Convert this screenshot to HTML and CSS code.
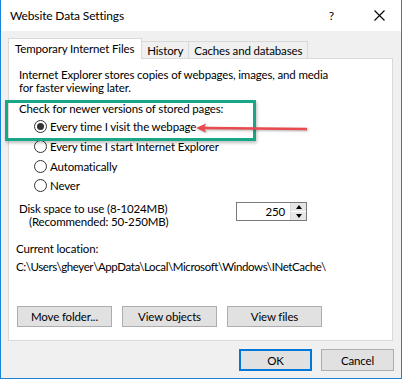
FILE: index.html
```html
<!DOCTYPE html>
<html lang="en">
<head>
    <meta charset="UTF-8">
    <title>Website Data Settings</title>
    <link rel="stylesheet" href="styles.css">
</head>
<body>
    <div class="window">
        <div class="titlebar">
            <span class="title">Website Data Settings</span>
            <span class="help">?</span>
            <svg class="close" width="11" height="11" viewBox="0 0 11 11">
                <path d="M0.5 0.5 L10.5 10.5 M10.5 0.5 L0.5 10.5" stroke="#000" stroke-width="1.1" fill="none"/>
            </svg>
        </div>
        <div class="body">
            <div class="tabs">
                <div class="tab active">Temporary Internet Files</div>
                <div class="tab">History</div>
                <div class="tab">Caches and databases</div>
            </div>
            <div class="panel">
                <p class="desc">Internet Explorer stores copies of webpages, images, and media<br>for faster viewing later.</p>
                <p class="check">Check for newer versions of stored pages:</p>
                <div class="radios">
                    <label class="radio"><span class="dot checked"></span>Every time I visit the webpage</label>
                    <label class="radio"><span class="dot"></span>Every time I start Internet Explorer</label>
                    <label class="radio"><span class="dot"></span>Automatically</label>
                    <label class="radio"><span class="dot"></span>Never</label>
                </div>
                <div class="disk">
                    <div class="disk-text">
                        <div>Disk space to use (8-1024MB)</div>
                        <div class="rec">(Recommended: 50-250MB)</div>
                    </div>
                    <div class="spinner">
                        <span class="value">250</span>
                        <div class="spin">
                            <span class="up"></span>
                            <span class="down"></span>
                        </div>
                    </div>
                </div>
                <p class="loc-label">Current location:</p>
                <p class="loc">C:\Users\gheyer\AppData\Local\Microsoft\Windows\INetCache\</p>
                <div class="actions">
                    <button class="btn">Move folder...</button>
                    <button class="btn">View objects</button>
                    <button class="btn">View files</button>
                </div>
            </div>
            <div class="footer">
                <button class="btn ok">OK</button>
                <button class="btn">Cancel</button>
            </div>

            <!-- annotation overlays -->
            <div class="highlight"></div>
            <svg class="arrow" width="120" height="14" viewBox="0 0 120 14">
                <path d="M9 7 L112 8" stroke="#e84a4f" stroke-width="2.5" fill="none"/>
                <path d="M1 7 L11 2.5 L9 7 L11 11.5 Z" fill="#e84a4f"/>
            </svg>
        </div>
    </div>
</body>
</html>
```

FILE: styles.css
```css
* { box-sizing: border-box; }
body { margin: 0; font-family: Lato, "Noto Sans", sans-serif; font-size: 11.5px; letter-spacing: -0.15px; color: #000; }
p { margin: 0; }

.window {
    width: 402px;
    height: 379px;
    border: 1px solid #1883d7;
    border-top: none;
    background: #f0f0f0;
    display: flex;
    flex-direction: column;
}

/* Title bar */
.titlebar { height: 31px; background: #fff; display: flex; align-items: center; padding-left: 9px; }
.title { flex: 1; font-size: 12px; }
.help { margin-right: 40px; font-size: 12px; }
.close { margin-right: 16px; }

.body { position: relative; flex: 1; padding-top: 7px; }

/* Tabs */
.tabs { display: flex; align-items: flex-end; margin-left: 7px; height: 20px; }
.tab {
    height: 17px;
    line-height: 17px;
    padding: 0 5px;
    border: 1px solid #d9d9d9;
    border-bottom: none;
    border-left: none;
    background: #f0f0f0;
}
.tab.active {
    height: 21px;
    line-height: 19px;
    padding: 0 7px 0 6px;
    border-left: 1px solid #d9d9d9;
    background: #fff;
    margin-bottom: -1px;
    position: relative;
    z-index: 1;
}

.panel {
    margin: 0 8px 0 7px;
    height: 283px;
    background: #fff;
    border: 1px solid #d9d9d9;
    padding: 9px 10px 0 10px;
}
.desc { line-height: 13px; }
.check { margin-top: 8px; line-height: 13px; }
.radios { margin-top: 2px; margin-left: 15px; }
.radio { display: flex; align-items: center; height: 19.67px; }
.dot {
    width: 13px;
    height: 13px;
    border: 1px solid #333;
    border-radius: 50%;
    margin-right: 3px;
    display: flex;
    align-items: center;
    justify-content: center;
}
.dot.checked::after { content: ""; width: 7px; height: 7px; border-radius: 50%; background: #333; }

.disk { display: flex; margin-top: 6px; }
.disk-text { width: 217px; line-height: 13px; }
.rec { padding-left: 10px; }
.spinner {
    width: 71px;
    height: 19px;
    border: 1px solid #7a7a7a;
    background: #fff;
    display: flex;
    justify-content: flex-end;
    align-items: center;
}
.value { margin-right: 5px; }
.spin { width: 16px; height: 17px; display: flex; flex-direction: column; border-left: 1px solid #d9d9d9; }
.spin span { flex: 1; background: #e6e6e6; display: flex; align-items: center; justify-content: center; }
.spin .up { border-bottom: 1px solid #fff; }
.up::after { content: ""; border: 3.5px solid transparent; border-bottom: 4px solid #000; border-top: none; }
.down::after { content: ""; border: 3.5px solid transparent; border-top: 4px solid #000; border-bottom: none; }

.loc-label { margin-top: 14px; margin-left: -3px; line-height: 13px; }
.loc { margin-top: 5px; margin-left: -3px; line-height: 13px; letter-spacing: -0.4px; }

.actions { display: flex; gap: 10px; margin-top: 33px; margin-left: -2px; }
.btn {
    width: 95px;
    height: 21px;
    background: #e1e1e1;
    border: 1px solid #adadad;
    font-family: inherit;
    font-size: inherit;
    letter-spacing: inherit;
    padding: 0;
    color: #000;
}

.footer { display: flex; justify-content: flex-end; gap: 9px; margin-top: 8px; margin-right: 7px; }
.footer .btn { width: 73px; height: 22px; }
.footer .ok { border: 2px solid #0078d7; }

/* Annotations */
.highlight {
    position: absolute;
    left: 4px;
    top: 69px;
    width: 251px;
    height: 41px;
    border: 3px solid #18a686;
    box-shadow: 1px 2px 3px rgba(0,0,0,0.25);
}
.arrow { position: absolute; left: 194px; top: 90px; filter: drop-shadow(1px 1px 1px rgba(0,0,0,0.3)); }
```
